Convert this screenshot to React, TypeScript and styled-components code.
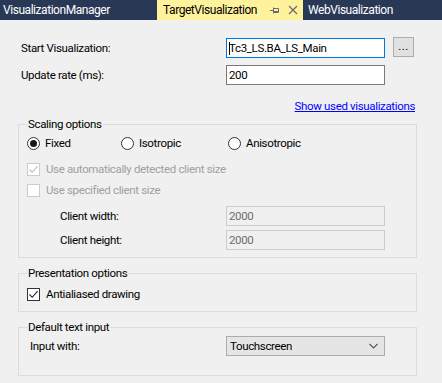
import React from "react";
import styled, { createGlobalStyle } from "styled-components";

const Global = createGlobalStyle`
  html, body { margin: 0; padding: 0; background: #f0f0f0; }
  body { font-family: Roboto, "Noto Sans", sans-serif; font-size: 11.5px; letter-spacing: -0.35px; color: #000; }
  * { box-sizing: border-box; }
`;

const Page = styled.div`
  width: 442px;
  height: 383px;
  background: #f0f0f0;
  overflow: hidden;
`;

const TabBar = styled.div`
  height: 20px;
  background: #293955;
  display: flex;
  align-items: stretch;
`;

const Tab = styled.div<{ $active?: boolean; $w: number; $pl: number }>`
  width: ${(p) => p.$w}px;
  height: ${(p) => (p.$active ? 20 : 19)}px;
  display: flex;
  align-items: center;
  padding-left: ${(p) => p.$pl}px;
  background: ${(p) => (p.$active ? "#fff29d" : "transparent")};
  color: ${(p) => (p.$active ? "#000" : "#ffffff")};
  font-size: 12px;
  letter-spacing: -0.45px;
  white-space: nowrap;
`;

const TabText = styled.span`
  flex: 1;
`;

const TabIcons = styled.span`
  display: flex;
  align-items: center;
  gap: 9px;
  padding-right: 5px;
`;

const Content = styled.div`
  padding: 18px 25px 0 18px;
  display: flex;
  flex-direction: column;
`;

const FormRow = styled.div<{ $mt?: number }>`
  display: flex;
  align-items: center;
  height: 20px;
  margin-top: ${(p) => p.$mt ?? 0}px;
`;

const Label = styled.span<{ $w: number; $pl?: number; $disabled?: boolean }>`
  width: ${(p) => p.$w}px;
  padding-left: ${(p) => p.$pl ?? 0}px;
  color: ${(p) => (p.$disabled ? "#a0a0a0" : "#000")};
  white-space: nowrap;
`;

const TextBox = styled.div<{ $focus?: boolean; $disabled?: boolean }>`
  width: 159px;
  height: 20px;
  border: 1px solid ${(p) => (p.$focus ? "#0078d7" : p.$disabled ? "#cccccc" : "#7a7a7a")};
  background: ${(p) => (p.$disabled ? "#f0f0f0" : "#ffffff")};
  color: ${(p) => (p.$disabled ? "#6d6d6d" : "#000")};
  display: flex;
  align-items: center;
  padding-left: 2px;
  white-space: nowrap;
`;

const Caret = styled.span`
  display: inline-block;
  width: 1px;
  height: 13px;
  background: #000;
  margin-right: -1px;
`;

const DotsButton = styled.div`
  width: 21px;
  height: 20px;
  margin-left: 8px;
  margin-top: -2px;
  border: 1px solid #adadad;
  background: #e1e1e1;
  display: flex;
  align-items: center;
  justify-content: center;
  padding-bottom: 3px;
  letter-spacing: 0.5px;
`;

const LinkRow = styled.div`
  display: flex;
  justify-content: flex-end;
  margin-top: 14px;
  height: 16px;
`;

const Link = styled.span`
  color: #0000ff;
  text-decoration: underline;
  padding-right: 2px;
`;

const Group = styled.fieldset<{ $h: number; $mt: number }>`
  margin: ${(p) => p.$mt}px 0 0 0;
  width: 399px;
  height: ${(p) => p.$h}px;
  border: 1px solid #dcdcdc;
  padding: 0 0 0 8px;
  min-width: 0;
`;

const Legend = styled.legend`
  padding: 0 1px;
  margin-left: 0;
  line-height: 14px;
`;

const OptionRow = styled.div<{ $mt: number }>`
  display: flex;
  align-items: center;
  height: 16px;
  margin-top: ${(p) => p.$mt}px;
`;

const Option = styled.div<{ $w?: number; $disabled?: boolean }>`
  display: flex;
  align-items: center;
  gap: 5px;
  width: ${(p) => (p.$w ? `${p.$w}px` : "auto")};
  color: ${(p) => (p.$disabled ? "#a0a0a0" : "#000")};
  white-space: nowrap;
`;

const RadioCircle = styled.span<{ $checked?: boolean }>`
  width: 13px;
  height: 13px;
  border-radius: 50%;
  border: 1px solid #333333;
  background: #fff;
  display: flex;
  align-items: center;
  justify-content: center;
  &::after {
    content: "";
    display: ${(p) => (p.$checked ? "block" : "none")};
    width: 7px;
    height: 7px;
    border-radius: 50%;
    background: #1a1a1a;
  }
`;

const CheckBox = styled.span<{ $disabled?: boolean }>`
  width: 13px;
  height: 13px;
  border: 1px solid ${(p) => (p.$disabled ? "#cccccc" : "#333333")};
  background: #fff;
  display: flex;
  align-items: center;
  justify-content: center;
  margin-right: 1px;
`;

const SubRow = styled.div<{ $mt: number }>`
  display: flex;
  align-items: center;
  height: 20px;
  margin-top: ${(p) => p.$mt}px;
`;

const Select = styled.div`
  width: 159px;
  height: 20px;
  border: 1px solid #adadad;
  background: #e5e5e5;
  display: flex;
  align-items: center;
  justify-content: space-between;
  padding: 0 6px 0 3px;
`;

const Check = ({ color }: { color: string }) => (
  <svg width="11" height="11" viewBox="0 0 11 11">
    <path d="M1.5 5.5 L4.2 8.3 L9.6 2.2" fill="none" stroke={color} strokeWidth="1.1" />
  </svg>
);

const PinIcon = () => (
  <svg width="9" height="9" viewBox="0 0 9 9">
    <path d="M0 4.5 H3 M3.5 1.5 V7.5 M3.5 2.5 H8.5 V6.5 H3.5 M3.5 5.5 H8.5" fill="none" stroke="#6a6a6a" strokeWidth="1" />
  </svg>
);

const CloseIcon = () => (
  <svg width="10" height="10" viewBox="0 0 10 10">
    <path d="M1 1 L9 9 M9 1 L1 9" fill="none" stroke="#6a6a6a" strokeWidth="1.2" />
  </svg>
);

const Chevron = () => (
  <svg width="9" height="6" viewBox="0 0 9 6">
    <path d="M0.5 1 L4.5 5 L8.5 1" fill="none" stroke="#555" strokeWidth="1.1" />
  </svg>
);

export default function App() {
  return (
    <Page>
      <Global />
      <TabBar>
        <Tab $w={157} $pl={3}>
          <TabText>VisualizationManager</TabText>
        </Tab>
        <Tab $active $w={146} $pl={6}>
          <TabText>TargetVisualization</TabText>
          <TabIcons>
            <PinIcon />
            <CloseIcon />
          </TabIcons>
        </Tab>
        <Tab $w={139} $pl={5}>
          <TabText>WebVisualization</TabText>
        </Tab>
      </TabBar>
      <Content>
        <FormRow>
          <Label $w={208} $pl={3}>Start Visualization:</Label>
          <TextBox $focus>
            <Caret />
            Tc3_LS.BA_LS_Main
          </TextBox>
          <DotsButton>...</DotsButton>
        </FormRow>
        <FormRow $mt={7}>
          <Label $w={208} $pl={3}>Update rate (ms):</Label>
          <TextBox>200</TextBox>
        </FormRow>
        <LinkRow>
          <Link>Show used visualizations</Link>
        </LinkRow>
        <Group $mt={2} $h={141}>
          <Legend>Scaling options</Legend>
          <OptionRow $mt={4}>
            <Option $w={94}>
              <RadioCircle $checked />
              Fixed
            </Option>
            <Option $w={107}>
              <RadioCircle />
              Isotropic
            </Option>
            <Option>
              <RadioCircle />
              Anisotropic
            </Option>
          </OptionRow>
          <OptionRow $mt={10}>
            <Option $disabled>
              <CheckBox $disabled>
                <Check color="#bcbcbc" />
              </CheckBox>
              Use automatically detected client size
            </Option>
          </OptionRow>
          <OptionRow $mt={5}>
            <Option $disabled>
              <CheckBox $disabled />
              Use specified client size
            </Option>
          </OptionRow>
          <SubRow $mt={8}>
            <Label $w={199} $pl={33}>Client width:</Label>
            <TextBox $disabled>2000</TextBox>
          </SubRow>
          <SubRow $mt={4}>
            <Label $w={199} $pl={33}>Client height:</Label>
            <TextBox $disabled>2000</TextBox>
          </SubRow>
        </Group>
        <Group $mt={8} $h={46}>
          <Legend>Presentation options</Legend>
          <OptionRow $mt={6}>
            <Option>
              <CheckBox>
                <Check color="#222" />
              </CheckBox>
              Antialiased drawing
            </Option>
          </OptionRow>
        </Group>
        <Group $mt={8} $h={56}>
          <Legend>Default text input</Legend>
          <SubRow $mt={2}>
            <Label $w={199} $pl={3}>Input with:</Label>
            <Select>
              <span>Touchscreen</span>
              <Chevron />
            </Select>
          </SubRow>
        </Group>
      </Content>
    </Page>
  );
}
